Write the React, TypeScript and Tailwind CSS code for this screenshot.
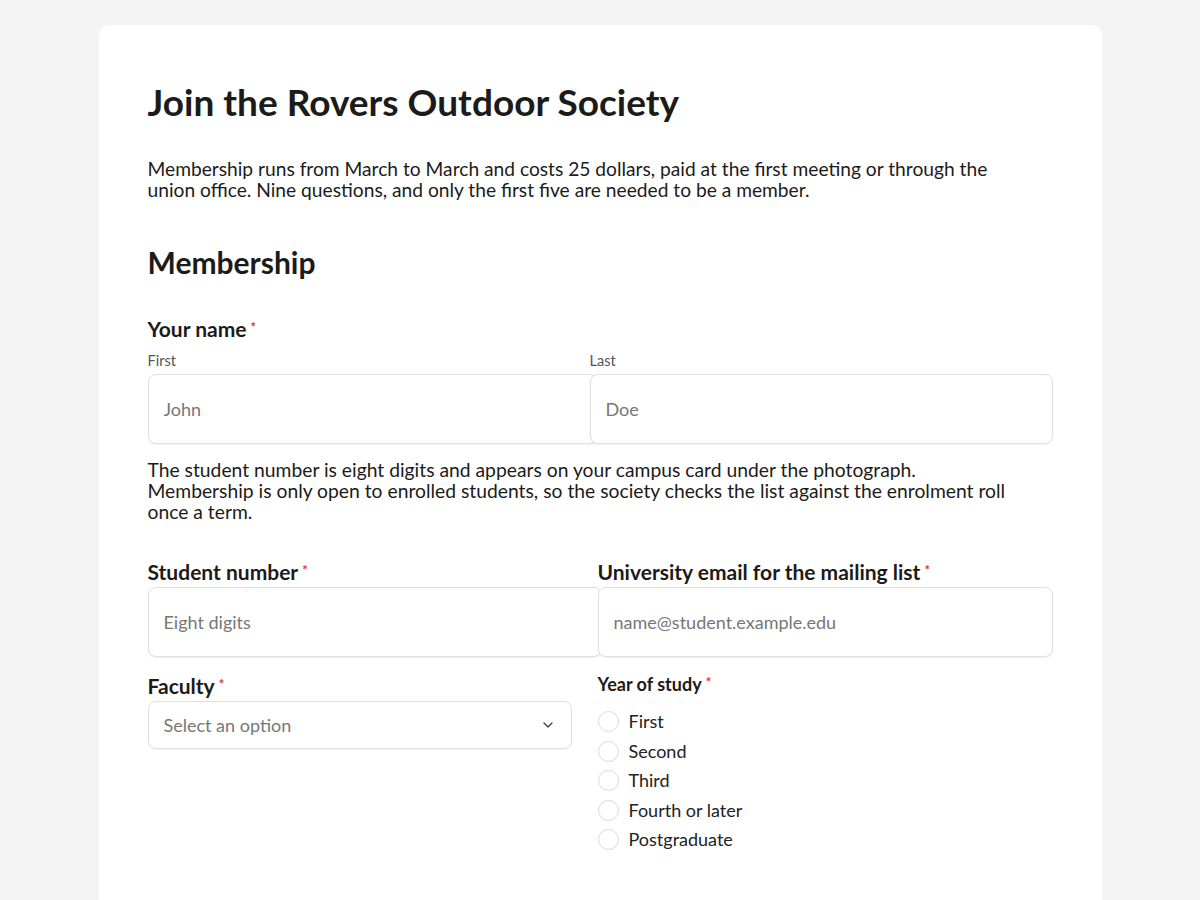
import { ChevronDown } from 'lucide-react';

const font = { fontFamily: 'Lato, "Noto Sans", sans-serif' };

function Req() {
    return <span className="text-[#d33] text-[13px] align-top ml-1 relative top-[-2px]">*</span>;
}

function TextInput({ placeholder, className = '' }: { placeholder: string; className?: string }) {
    return (
        <input
            placeholder={placeholder}
            className={`h-[70px] rounded-lg border border-[#e2e0dc] bg-white px-[15px] text-[18px] text-[#222] placeholder:text-[#777] shadow-[0_1px_2px_rgba(0,0,0,0.06)] outline-none ${className}`}
            style={font}
        />
    );
}

const years = ['First', 'Second', 'Third', 'Fourth or later', 'Postgraduate'];

export default function App() {
    return (
        <div className="min-h-[900px] bg-[#f4f4f4] pt-[25px] text-[#1c1b19]" style={font}>
            <div className="mx-auto w-[1003px] min-h-[875px] rounded-t-[10px] bg-white px-[49px] pt-[53px] pb-10">
                <h1 className="text-[37px] font-bold leading-[48px]">Join the Rovers Outdoor Society</h1>
                <p className="mt-[32px] text-[19.2px] leading-[21px]">
                    Membership runs from March to March and costs 25 dollars, paid at the first meeting or through the
                    <br />
                    union office. Nine questions, and only the first five are needed to be a member.
                </p>

                <h2 className="mt-[44px] text-[30px] font-bold leading-[36px]">Membership</h2>

                <div className="mt-[37px]">
                    <div className="text-[21px] font-bold leading-[24px]">Your name<Req /></div>
                    <div className="mt-[11px] flex">
                        <div className="w-[442px] shrink-0">
                            <div className="text-[14.5px] text-[#555] leading-[18px]">First</div>
                            <TextInput placeholder="John" className="mt-[4px] w-[450px] relative" />
                        </div>
                        <div className="relative z-10 w-[463px]">
                            <div className="text-[14.5px] text-[#555] leading-[18px]">Last</div>
                            <TextInput placeholder="Doe" className="mt-[4px] w-[463px]" />
                        </div>
                    </div>
                </div>

                <p className="mt-[15px] text-[19.3px] leading-[21px]">
                    The student number is eight digits and appears on your campus card under the photograph.
                    <br />
                    Membership is only open to enrolled students, so the society checks the list against the enrolment roll
                    <br />
                    once a term.
                </p>

                <div className="mt-[38px] flex">
                    <div className="w-[450px] shrink-0">
                        <div className="text-[21px] font-bold leading-[24px]">Student number<Req /></div>
                        <TextInput placeholder="Eight digits" className="mt-[3px] w-[454px]" />
                    </div>
                    <div className="relative z-10 w-[455px]">
                        <div className="text-[21px] font-bold leading-[24px]">University email for the mailing list<Req /></div>
                        <TextInput placeholder="name@student.example.edu" className="mt-[3px] w-[455px]" />
                    </div>
                </div>

                <div className="mt-[14px] flex">
                    <div className="w-[450px] shrink-0">
                        <div className="text-[21px] font-bold leading-[24px] mt-[3px]">Faculty<Req /></div>
                        <div className="mt-[3px] flex h-[48px] w-[424px] items-center justify-between rounded-lg border border-[#e2e0dc] px-[15px] shadow-[0_1px_2px_rgba(0,0,0,0.06)]">
                            <span className="text-[18px] text-[#777]">Select an option</span>
                            <ChevronDown size={16} strokeWidth={2} className="text-[#444]" />
                        </div>
                    </div>
                    <div className="w-[455px]">
                        <div className="mt-[2px] text-[18px] font-bold leading-[22px]">Year of study<Req /></div>
                        <div className="mt-[16px] flex flex-col gap-[8.5px]">
                            {years.map((y) => (
                                <label key={y} className="flex items-center gap-[10px] leading-[21px]">
                                    <span className="h-[21px] w-[21px] rounded-full border border-[#dcdad6] bg-white" />
                                    <span className="text-[18px] text-[#222]">{y}</span>
                                </label>
                            ))}
                        </div>
                    </div>
                </div>
            </div>
        </div>
    );
}
